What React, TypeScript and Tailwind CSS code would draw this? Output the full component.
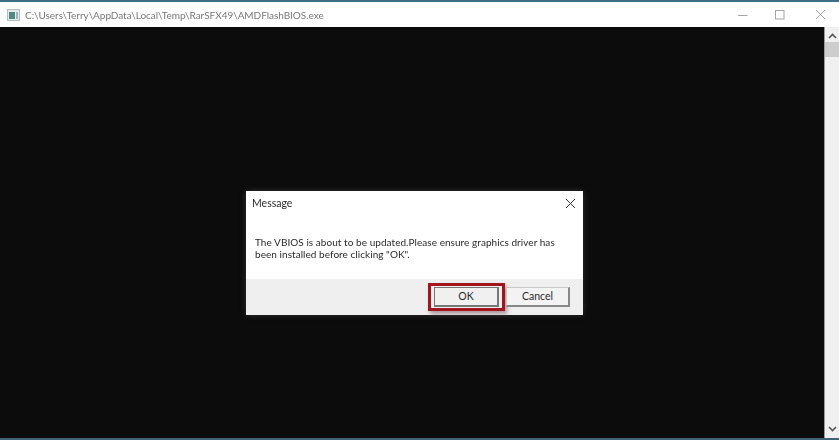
export default function App() {
  return (
    <div className="w-[839px] h-[440px] flex flex-col overflow-hidden bg-[#0c0c0c]" style={{ fontFamily: 'Lato, "Noto Sans", sans-serif' }}>
      <div className="h-[2px] bg-[#3f6f86]" />
      <div className="h-[25px] bg-white flex items-center pl-[7px]">
        <svg width="13" height="12" viewBox="0 0 13 12" className="shrink-0 blur-[0.4px]">
          <rect x="0" y="0" width="13" height="12" fill="#b4bdbf" />
          <rect x="1" y="1" width="11" height="10" fill="#e6eaea" />
          <rect x="2" y="3" width="6" height="7" fill="#4d8a80" />
          <rect x="9" y="3" width="2" height="7" fill="#a4b2b6" />
        </svg>
        <span className="ml-[5px] text-[10px] leading-none text-[#777] whitespace-nowrap tracking-[-0.04px] blur-[0.3px]">
          C:\Users\Terry\AppData\Local\Temp\RarSFX49\AMDFlashBIOS.exe
        </span>
        <div className="ml-auto flex items-center">
          <svg width="10" height="10" viewBox="0 0 10 10" className="mr-[27px]">
            <path d="M0 5.5H9.5" stroke="#a5a5a5" strokeWidth="1" />
          </svg>
          <svg width="10" height="10" viewBox="0 0 10 10" className="mr-[30px]">
            <rect x="0.5" y="0.5" width="8.5" height="8.5" fill="none" stroke="#a5a5a5" strokeWidth="1" />
          </svg>
          <svg width="11" height="11" viewBox="0 0 11 11" className="mr-[13px]">
            <path d="M1 1L10 10M10 1L1 10" stroke="#a5a5a5" strokeWidth="1" fill="none" />
          </svg>
        </div>
      </div>
      <div className="flex-1 flex min-h-0">
        <div className="flex-1 bg-[#0c0c0c] pl-[246px] pt-[164px]">
          <div className="w-[337px] h-[124px] bg-white flex flex-col shadow-[0_0_6px_rgba(120,120,120,0.35)] text-[#2a2a2a]">
            <div className="flex items-center justify-between h-[25px] pl-[6px] pr-[7px]">
              <span className="text-[10.5px] leading-none blur-[0.2px]">Message</span>
              <svg width="11" height="11" viewBox="0 0 11 11">
                <path d="M1 1L10 10M10 1L1 10" stroke="#333" strokeWidth="1" fill="none" />
              </svg>
            </div>
            <div className="flex-1 pl-[9px] pt-[21px] text-[10px] leading-[11.5px] tracking-[0.05px] whitespace-pre-line blur-[0.2px]">
              {'The VBIOS is about to be updated.Please ensure graphics driver has\nbeen installed before clicking "OK".'}
            </div>
            <div className="h-[36px] bg-[#efefef] flex items-center justify-end pr-[13px] pb-[1px]">
              <div className="w-[77px] h-[28px] border-[3px] border-[#a3141d] flex items-center justify-center shadow-[2px_3px_4px_rgba(110,80,90,0.55)] mr-[1px]">
                <button className="w-[65px] h-[20px] bg-[#f0f0f0] border border-[#777] border-b-2 border-r-2 text-[10.5px] leading-none">OK</button>
              </div>
              <button className="w-[64px] h-[20px] bg-[#f3f3f3] border border-[#c8c8c8] border-r-[#888] border-b-[#888] border-b-2 border-r-2 text-[10.5px] leading-none">Cancel</button>
            </div>
          </div>
        </div>
        <div className="w-[15px] bg-[#f0f0f0] flex flex-col items-center border-l border-[#9a9a9a]">
          <svg width="9" height="6" viewBox="0 0 9 6" className="mt-[6px]">
            <path d="M1 5L4.5 1.5L8 5" stroke="#555" strokeWidth="1.6" fill="none" />
          </svg>
          <div className="w-[14px] h-[15px] bg-[#cdcdcd] mt-[3px]" />
          <svg width="9" height="6" viewBox="0 0 9 6" className="mt-auto mb-[6px]">
            <path d="M1 1L4.5 4.5L8 1" stroke="#555" strokeWidth="1.6" fill="none" />
          </svg>
        </div>
      </div>
      <div className="h-[2px] bg-[#3f6473]" />
    </div>
  );
}
